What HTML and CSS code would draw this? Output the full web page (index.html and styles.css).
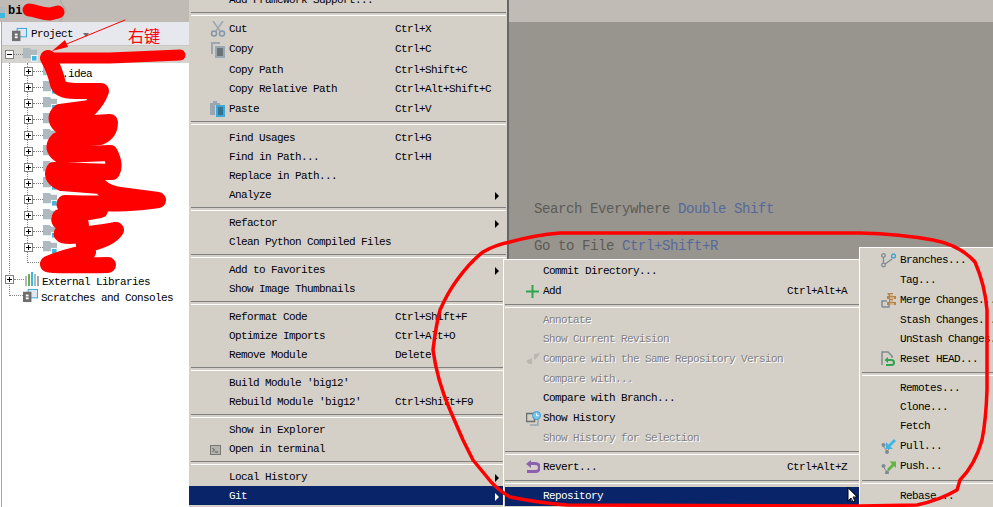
FILE: index.html
```html
<!DOCTYPE html>
<html lang="en">
<head>
<meta charset="utf-8">
<title>Git menu</title>
<link rel="stylesheet" href="styles.css">
</head>
<body>
<svg class="defs" width="0" height="0" aria-hidden="true">
  <symbol id="folder" viewBox="0 0 16 16">
    <path d="M0 1h7l2 2h6v9H0z" fill="#aeb9c0"/>
    <rect x="9" y="9" width="6" height="6" fill="#40b6e0" stroke="#fff"/>
  </symbol>
  <symbol id="panel" viewBox="0 0 16 16">
    <rect x="5.500" y="1.500" width="10" height="9" fill="#dfe8f0" stroke="#389fd6"/>
    <rect x="0" y="4" width="9" height="11" fill="#6e6e6e"/>
    <rect x="3" y="7" width="3" height="2" fill="#fff"/>
    <rect x="3" y="10" width="3" height="2" fill="#fff"/>
  </symbol>
</svg>

<div class="desk">
  <aside class="side">
    <div class="crumb">
      <span class="crumb-mark"></span>
      <b class="crumb-name">bi</b>
      <svg class="crumb-chevron" width="7" height="22" viewBox="0 0 7 22"><path d="M0 0l6 11-6 11" fill="none" stroke="#a8a49c"/></svg>
    </div>
    <div class="panel-head">
      <svg class="ico16" width="15" height="15"><use href="#panel"/></svg>
      <span class="panel-title">Project</span>
      <span class="panel-caret"></span>
    </div>
    <div class="tree">
      <div class="node root">
        <span class="box minus"></span><span class="dash"></span>
        <svg width="15" height="15"><use href="#folder"/></svg>
      </div>
      <div class="kids-outer">
        <div class="kids">
          <div class="node"><span class="box"></span><span class="dash"></span><svg width="15" height="15"><use href="#folder"/></svg><span class="label">.idea</span></div>
          <div class="node"><span class="box"></span><span class="dash"></span><svg width="15" height="15"><use href="#folder"/></svg></div>
          <div class="node"><span class="box"></span><span class="dash"></span><svg width="15" height="15"><use href="#folder"/></svg></div>
          <div class="node"><span class="box"></span><span class="dash"></span><svg width="15" height="15"><use href="#folder"/></svg></div>
          <div class="node"><span class="box"></span><span class="dash"></span><svg width="15" height="15"><use href="#folder"/></svg></div>
          <div class="node"><span class="box"></span><span class="dash"></span><svg width="15" height="15"><use href="#folder"/></svg></div>
          <div class="node"><span class="box"></span><span class="dash"></span><svg width="15" height="15"><use href="#folder"/></svg></div>
          <div class="node"><span class="box"></span><span class="dash"></span><svg width="15" height="15"><use href="#folder"/></svg></div>
          <div class="node"><span class="box"></span><span class="dash"></span><svg width="15" height="15"><use href="#folder"/></svg></div>
          <div class="node"><span class="box"></span><span class="dash"></span><svg width="15" height="15"><use href="#folder"/></svg></div>
          <div class="node"><span class="box"></span><span class="dash"></span><svg width="15" height="15"><use href="#folder"/></svg></div>
          <div class="node"><span class="box"></span><span class="dash"></span><svg width="15" height="15"><use href="#folder"/></svg></div>
          <div class="node leaf"><span class="dash long"></span></div>
        </div>
        <div class="node top-level">
          <span class="box"></span><span class="dash"></span>
          <svg width="15" height="15" viewBox="0 0 15 15">
            <path d="M1 4h2v10H1z" fill="#aeb9c0"/><path d="M4 2h2v12H4z" fill="#62b543"/><path d="M7 0h2v14H7z" fill="#40b6e0"/><path d="M10 2h2v12h-2z" fill="#aeb9c0"/><path d="M13 4h2v10h-2z" fill="#9aa7b0"/>
          </svg>
          <span class="label">External Libraries</span>
        </div>
        <div class="node top-level last">
          <span class="dash long"></span>
          <svg width="15" height="15"><use href="#panel"/></svg>
          <span class="label">Scratches and Consoles</span>
        </div>
      </div>
    </div>
  </aside>

  <nav class="menu main-menu">
    <div class="row clipped"><span class="text">Add Framework Support...</span></div>
    <div class="sep"></div>
    <div class="row r20">
      <svg class="icon" width="16" height="16" viewBox="0 0 16 16"><path d="M3 0l7 10M13 0L6 10" stroke="#9aa7b0" stroke-width="1.500" fill="none"/><circle cx="4" cy="12.500" r="2.500" fill="none" stroke="#7f97a8" stroke-width="1.500"/><circle cx="12" cy="12.500" r="2.500" fill="none" stroke="#7f97a8" stroke-width="1.500"/></svg>
      <span class="text">Cut</span><span class="key">Ctrl+X</span>
    </div>
    <div class="row r21">
      <svg class="icon" width="15" height="16" viewBox="0 0 15 16"><path d="M1 0h9v2H3v10H1z" fill="#9aa7b0"/><rect x="5" y="4" width="10" height="12" fill="#9aa7b0"/><path d="M7 7h6M7 9h6M7 11h6M7 13h6" stroke="#3a3f42"/></svg>
      <span class="text">Copy</span><span class="key">Ctrl+C</span>
    </div>
    <div class="row r20"><span class="text">Copy Path</span><span class="key">Ctrl+Shift+C</span></div>
    <div class="row"><span class="text">Copy Relative Path</span><span class="key">Ctrl+Alt+Shift+C</span></div>
    <div class="row r20">
      <svg class="icon" width="15" height="16" viewBox="0 0 15 16"><path d="M0 2h3V0h4v2h3v2H5v10H0z" fill="#9aa7b0"/><rect x="6" y="4" width="9" height="12" fill="#40a8d8"/><path d="M8 7h5M8 9h5M8 11h5M8 13h5" stroke="#23414f"/></svg>
      <span class="text">Paste</span><span class="key">Ctrl+V</span>
    </div>
    <div class="sep"></div>
    <div class="row r20"><span class="text">Find Usages</span><span class="key">Ctrl+G</span></div>
    <div class="row"><span class="text">Find in Path...</span><span class="key">Ctrl+H</span></div>
    <div class="row"><span class="text">Replace in Path...</span></div>
    <div class="row"><span class="text">Analyze</span><span class="arrow"></span></div>
    <div class="sep"></div>
    <div class="row"><span class="text">Refactor</span><span class="arrow"></span></div>
    <div class="row"><span class="text">Clean Python Compiled Files</span></div>
    <div class="sep"></div>
    <div class="row"><span class="text">Add to Favorites</span><span class="arrow"></span></div>
    <div class="row"><span class="text">Show Image Thumbnails</span></div>
    <div class="sep"></div>
    <div class="row"><span class="text">Reformat Code</span><span class="key">Ctrl+Shift+F</span></div>
    <div class="row"><span class="text">Optimize Imports</span><span class="key">Ctrl+Alt+O</span></div>
    <div class="row"><span class="text">Remove Module</span><span class="key">Delete</span></div>
    <div class="sep"></div>
    <div class="row"><span class="text">Build Module 'big12'</span></div>
    <div class="row"><span class="text">Rebuild Module 'big12'</span><span class="key">Ctrl+Shift+F9</span></div>
    <div class="sep"></div>
    <div class="row"><span class="text">Show in Explorer</span></div>
    <div class="row">
      <svg class="icon" width="11" height="10" viewBox="0 0 11 10"><rect x=".5" y=".5" width="10" height="9" fill="#b5b3ad" stroke="#77756f"/><path d="M2.500 3l2 2-2 2M5 7h3" stroke="#55534f" fill="none"/></svg>
      <span class="text">Open in terminal</span>
    </div>
    <div class="sep"></div>
    <div class="row"><span class="text">Local History</span><span class="arrow"></span></div>
    <div class="row active"><span class="text">Git</span><span class="arrow"></span></div>
  </nav>

  <main class="editor">
    <div class="editor-top"></div>
    <div class="hints">
      <p class="hint">Search Everywhere <span class="hint-key">Double Shift</span></p>
      <p class="hint">Go to File <span class="hint-key">Ctrl+Shift+R</span></p>
    </div>
  </main>
</div>

<nav class="menu git-menu">
  <div class="row r20"><span class="text">Commit Directory...</span></div>
  <div class="row r20">
    <svg class="icon" width="13" height="13" viewBox="0 0 13 13"><path d="M6.500 0v13M0 6.500h13" stroke="#2ea44f" stroke-width="2"/></svg>
    <span class="text">Add</span><span class="key">Ctrl+Alt+A</span>
  </div>
  <div class="sep"></div>
  <div class="row r20 off"><span class="text">Annotate</span></div>
  <div class="row off"><span class="text">Show Current Revision</span></div>
  <div class="row r20 off">
    <svg class="icon" width="14" height="14" viewBox="0 0 14 14"><path d="M0 9l6-3v6H3z M8 8V2h3l3-2-2 5z" fill="#b9b7b1"/></svg>
    <span class="text">Compare with the Same Repository Version</span>
  </div>
  <div class="row r20 off"><span class="text">Compare with...</span></div>
  <div class="row"><span class="text">Compare with Branch...</span></div>
  <div class="row r20">
    <svg class="icon" width="15" height="15" viewBox="0 0 15 15"><path d="M.5 2.500h8v8h-8z" fill="none" stroke="#6e6e6e" stroke-width="1.500"/><path d="M4 14h8V8" fill="none" stroke="#9aa7b0" stroke-width="1.500"/><circle cx="10.500" cy="4.500" r="4" fill="#7cc5ec" stroke="#389fd6"/><path d="M10.500 2.500v2.200h2" stroke="#fff" fill="none"/></svg>
    <span class="text">Show History</span>
  </div>
  <div class="row r20 off"><span class="text">Show History for Selection</span></div>
  <div class="sep"></div>
  <div class="row r20">
    <svg class="icon" width="14" height="14" viewBox="0 0 14 14"><path d="M5 0L0 4l5 4V5h4.500a2.500 2.500 0 0 1 0 5H1v3h8.500a5 5 0 0 0 0-11H5z" fill="#8e5fb0"/></svg>
    <span class="text">Revert...</span><span class="key">Ctrl+Alt+Z</span>
  </div>
  <div class="sep s10"></div>
  <div class="row active"><span class="text">Repository</span><span class="arrow"></span></div>
</nav>

<nav class="menu branch-menu">
  <div class="row r20">
    <svg class="icon" width="15" height="15" viewBox="0 0 15 15"><g fill="none" stroke="#7f8b91" stroke-width="1.300"><circle cx="2.500" cy="2.500" r="1.800"/><circle cx="2.500" cy="12" r="1.800"/><path d="M2.500 4.500v5.500M4 11l7-5"/></g><circle cx="12.500" cy="3" r="2" fill="none" stroke="#389fd6" stroke-width="1.300"/></svg>
    <span class="text">Branches...</span>
  </div>
  <div class="row r20"><span class="text">Tag...</span></div>
  <div class="row r20">
    <svg class="icon" width="15" height="15" viewBox="0 0 15 15"><path d="M1 14V8h5M1 14h7v-2" fill="none" stroke="#7f8b91" stroke-width="1.500"/><path d="M6 0h6v3h3v3h-3v3h3v3H6V9h2V6H6V3h2z" fill="#b8834a"/><path d="M9 2h3M9 5h4M9 8h3M9 11h4" stroke="#efe6d8"/></svg>
    <span class="text">Merge Changes...</span>
  </div>
  <div class="row r20"><span class="text">Stash Changes...</span></div>
  <div class="row"><span class="text">UnStash Changes...</span></div>
  <div class="row r20">
    <svg class="icon" width="14" height="16" viewBox="0 0 14 16"><path d="M1 14V1h6l4 4v2" fill="none" stroke="#7f8b91" stroke-width="1.500"/><path d="M7 6L3.500 9 7 12v-2h3.500a1.500 1.500 0 0 1 0 3H5v2h5.500a3.500 3.500 0 0 0 0-7H7z" fill="#2ea44f"/></svg>
    <span class="text">Reset HEAD...</span>
  </div>
  <div class="sep"></div>
  <div class="row r20"><span class="text">Remotes...</span></div>
  <div class="row"><span class="text">Clone...</span></div>
  <div class="row"><span class="text">Fetch</span></div>
  <div class="row r20">
    <svg class="icon" width="15" height="15" viewBox="0 0 15 15"><circle cx="2.500" cy="6" r="2" fill="#7f8b91"/><circle cx="6" cy="13" r="2" fill="#7f8b91"/><path d="M2.500 7.500L6 12M6 12l3-3" stroke="#7f8b91" fill="none"/><path d="M15 2L9.500 7.500 12 10H5V3l2.500 2.500L13 0z" fill="#40b6e0"/></svg>
    <span class="text">Pull...</span>
  </div>
  <div class="row r21">
    <svg class="icon" width="15" height="15" viewBox="0 0 15 15"><circle cx="2.500" cy="7" r="2" fill="#7f8b91"/><circle cx="6" cy="13.500" r="2" fill="#7f8b91"/><path d="M2.500 8L6 13M6 13l3-4" stroke="#7f8b91" fill="none"/><path d="M6 10l5-5-2.500-2.500H15V9l-2-2-5 5z" fill="#62b543"/></svg>
    <span class="text">Push...</span>
  </div>
  <div class="sep"></div>
  <div class="row r20"><span class="text">Rebase...</span></div>
</nav>

<span class="note">右键</span>

<svg class="ink" width="993" height="507" viewBox="0 0 993 507" aria-hidden="true">
  <path class="ink-arrow" d="M125 20L57 48"/>
  <path class="ink-head" d="M52 51l13-11 3 7z"/>
  <path class="ink-fat" d="M29 10C35 10 40 14 50 14L58 12"/>
  <path class="ink-top" d="M180 55L110 58L48 58"/>
  <path class="ink-thick" d="M48 58Q55 70 58 84Q60 91 75 91L101 91Q98 100 90 108L60 112Q53 118 60 125L110 122Q110 133 100 137L58 140Q50 148 60 155L110 153Q116 165 112 172L54 170Q50 178 62 183L100 186Q105 192 120 195L158 200Q130 205 65 203Q60 208 100 210L60 217Q55 225 80 223Q85 228 62 233Q58 240 116 230Q110 240 84 245L88 252Q60 258 48 264Q47 266 108 265"/>
  <path class="ink-thin" d="M560 233L860 233Q900 234 933 240Q960 245 975 262Q985 285 987 310L987 390Q986 420 982 440Q975 465 960 480L957 490Q940 500 917 505L860 506L567 505Q540 503 510 497Q495 488 487 477L473 460L463 440L450 410Q437 380 433 350Q436 325 440 310Q448 292 457 280Q470 262 483 252Q495 245 510 242Q535 235 560 233Z"/>
  <path class="cursor" d="M848 488v13l3-3 2 4 2-1-2-4h4z"/>
</svg>
</body>
</html>
```
FILE: styles.css
```css
* { box-sizing: border-box; }
html, body { margin: 0; height: 100%; }
body {
  width: 993px;
  height: 507px;
  overflow: hidden;
  position: relative;
  font: 11px/1 "Liberation Mono", "DejaVu Sans Mono", monospace;
  letter-spacing: -0.6px;
  color: #000;
  background: #fff;
}
.defs { position: absolute; }
.desk { display: flex; height: 507px; }

/* project sidebar */
.side { width: 189px; flex: none; display: flex; flex-direction: column; background: #fff; }
.crumb { height: 22px; background: #c0bbb4; display: flex; align-items: center; }
.crumb-mark {
  width: 5px;
  height: 11px;
  background: linear-gradient(#aeb9c0 55%, #40b6e0 55%);
  align-self: flex-end;
  margin-bottom: 4px;
}
.crumb-name { margin-left: 3px; width: 52px; font-size: 12px; letter-spacing: 0; }
.crumb-chevron { flex: none; }
.panel-head {
  height: 24px;
  margin-left: 1px;
  padding: 2px 0 0 10px;
  display: flex;
  align-items: center;
  background: #e6e8ee;
  border-left: 1px solid #a8a6a0;
  border-bottom: 1px solid #c9c8c4;
}
.panel-title { margin-left: 4px; }
.panel-caret {
  margin-left: 10px;
  border-left: 3px solid transparent;
  border-right: 3px solid transparent;
  border-top: 4px solid #6e6e6e;
}
.tree { flex: 1; border-left: 1px solid #a8a6a0; margin-left: 1px; display: flex; flex-direction: column; }
.node { height: 16px; display: flex; align-items: center; flex: none; }
.node svg { flex: none; }
.root { height: 17px; padding-left: 3px; background: #d5d3ce; }
.root .dash { width: 9px; }
.box {
  width: 9px;
  height: 9px;
  flex: none;
  border: 1px solid #808080;
  background:
    linear-gradient(#000, #000) center / 5px 1px no-repeat,
    linear-gradient(#000, #000) center / 1px 5px no-repeat,
    #fff;
}
.box.minus {
  background: linear-gradient(#000, #000) center / 5px 1px no-repeat, #fff;
}
.dash { width: 10px; flex: none; border-top: 1px dotted #808080; }
.dash.long { width: 13px; }
.label { margin-left: 4px; padding-top: 6px; white-space: nowrap; }
.kids-outer { margin-left: 7px; border-left: 1px dotted #808080; align-self: flex-start; }
.kids { margin: 0 0 8px 17px; border-left: 1px dotted #808080; }
.kids .node { margin-left: -4px; }
.kids .leaf { margin: 7px 0 0; height: 1px; }
.top-level { margin-left: -5px; }
.top-level.last { margin: 8px 0 0; height: 1px; }
.top-level .label { margin-left: 3px; }

/* popup menus */
.menu { background: #d4d0c8; }
.row {
  height: 19px;
  display: flex;
  align-items: center;
  position: relative;
  padding-left: 40px;
  white-space: nowrap;
}
.r20 { height: 20px; }
.r21 { height: 21px; }
.icon { position: absolute; }
.key { position: absolute; left: 206px; }
.arrow {
  position: absolute;
  right: 8px;
  border-top: 4px solid transparent;
  border-bottom: 4px solid transparent;
  border-left: 4px solid #000;
}
.sep {
  height: 9px;
  margin-left: 2px;
  padding-top: 3px;
}
.sep::before {
  content: "";
  display: block;
  height: 2px;
  border-top: 1px solid #808080;
  border-bottom: 1px solid #fff;
}
.s10 { height: 10px; }
.active { background: #0a246a; color: #fff; }
.active .arrow { border-left-color: #fff; }
.off { color: #808080; text-shadow: 1px 1px 0 #fff; }

.main-menu {
  width: 320px;
  flex: none;
  border-right: 2px solid #666;
  overflow: hidden;
}
.clipped { margin-top: -10px; }
.main-menu .icon { left: 21px; }
.main-menu .row { padding: 2px 0 0 40px; }
.main-menu .sep { margin-right: 1px; }

.git-menu {
  position: absolute;
  left: 503px;
  top: 259px;
  width: 356px;
  height: 248px;
  padding: 1px 0 0 1px;
  border-left: 1px solid #fff;
  border-top: 1px solid #fff;
}
.git-menu .row { padding-left: 38px; }
.git-menu .icon { left: 21px; }
.git-menu .key { left: 282px; }
.git-menu .arrow { right: 4px; }
.git-menu .sep { margin-left: 0; }

.branch-menu {
  position: absolute;
  left: 859px;
  top: 247px;
  width: 134px;
  height: 260px;
  overflow: hidden;
  padding: 2px 0 0;
  border-left: 1px solid #fff;
  border-top: 1px solid #fff;
}
.branch-menu .row { padding-left: 40px; }
.branch-menu .icon { left: 21px; }

/* editor */
.editor { flex: 1; background: #98958e; display: flex; flex-direction: column; }
.editor-top { height: 22px; background: #c0bbb4; flex: none; }
.hints { padding: 180px 0 0 25px; }
.hint {
  margin: 0 0 23px;
  font-size: 14px;
  line-height: 14px;
  letter-spacing: -0.4px;
  color: #5c5b57;
}
.hint-key { color: #56689a; }

/* annotations on top of the screenshot */
.note {
  position: absolute;
  left: 128px;
  top: 27px;
  font: 16px/1 "Noto Sans CJK SC", sans-serif;
  letter-spacing: 0;
  color: #f00;
}
.ink { position: absolute; left: 0; top: 0; pointer-events: none; }
.ink path { fill: none; stroke: #f00; stroke-linecap: round; stroke-linejoin: round; }
.ink .ink-arrow { stroke-width: 1; }
.ink .ink-head { fill: #f00; stroke: none; }
.ink .ink-fat { stroke-width: 13; }
.ink .ink-top { stroke-width: 11; }
.ink .ink-thick { stroke-width: 16; }
.ink .ink-thin { stroke-width: 3.500; }
.ink .cursor { fill: #fff; stroke: #000; stroke-width: 1; }
```
